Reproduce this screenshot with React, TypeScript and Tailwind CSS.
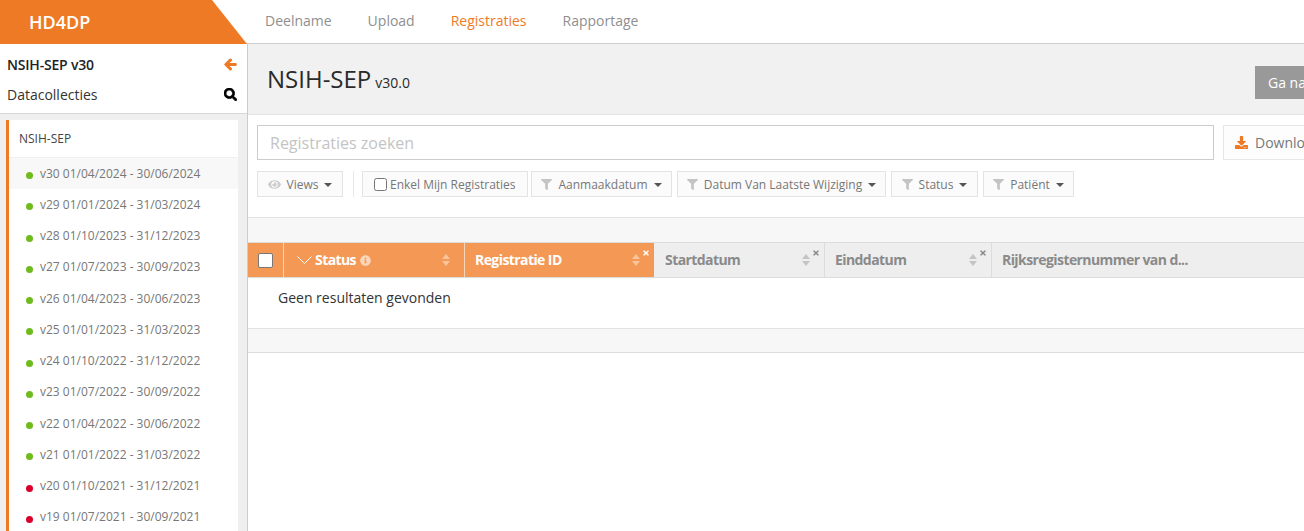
import { FaArrowLeft, FaDownload, FaEye, FaFilter, FaInfoCircle, FaSearch, FaTimes } from "react-icons/fa"

const rows = [
  { label: "v30 01/04/2024 - 30/06/2024", ok: true, active: true },
  { label: "v29 01/01/2024 - 31/03/2024", ok: true },
  { label: "v28 01/10/2023 - 31/12/2023", ok: true },
  { label: "v27 01/07/2023 - 30/09/2023", ok: true },
  { label: "v26 01/04/2023 - 30/06/2023", ok: true },
  { label: "v25 01/01/2023 - 31/03/2023", ok: true },
  { label: "v24 01/10/2022 - 31/12/2022", ok: true },
  { label: "v23 01/07/2022 - 30/09/2022", ok: true },
  { label: "v22 01/04/2022 - 30/06/2022", ok: true },
  { label: "v21 01/01/2022 - 31/03/2022", ok: true },
  { label: "v20 01/10/2021 - 31/12/2021", ok: false },
  { label: "v19 01/07/2021 - 30/09/2021", ok: false },
]

function Caret() {
  return <span className="ml-[6px] w-0 h-0 border-x-[4px] border-x-transparent border-t-[4px] border-t-[#555]" />
}

function FilterButton({ label, width }: { label: string; width: string }) {
  return (
    <div className={`h-[26px] pt-[1px] flex items-center justify-center border border-[#e3e3e3] bg-[#fbfbfb] text-[12px] text-[#777] ${width}`}>
      <FaFilter size={11} className="mr-[6px] shrink-0 text-[#c4c4c4]" />
      <span>{label}</span>
      <Caret />
    </div>
  )
}

function SortArrows({ color }: { color: string }) {
  return (
    <svg viewBox="0 0 8 12" className="w-[8px] h-[12px] shrink-0">
      <path d="M4 0l4 5H0zM4 12L0 7h8z" fill={color} />
    </svg>
  )
}

function HeaderCell({ label, width }: { label: string; width: string }) {
  return (
    <div className={`relative h-full flex items-center justify-between pr-[14px] border-r border-[#dcdcdc] ${width}`}>
      <span className="text-[14px] font-bold tracking-[-0.58px] text-[#8a8a8a] pb-[2px]">{label}</span>
      <SortArrows color="#c4c4c4" />
      <FaTimes size={8} className="absolute top-[6px] right-[4px] text-[#888]" />
    </div>
  )
}

export default function App() {
  return (
    <div className="h-[531px] w-[1304px] overflow-hidden bg-white flex flex-col font-['Open_Sans',sans-serif] text-[#333]">
      <header className="h-[44px] shrink-0 flex border-b border-[#ccc]">
        <div className="w-[247px] h-[44px] shrink-0 flex items-center bg-[#ef7a26] [clip-path:polygon(0_0,212px_0,100%_100%,0_100%)] pl-[29px]">
          <span className="text-[18px] font-semibold text-white">HD4DP</span>
        </div>
        <nav className="flex items-center gap-[36px] pl-[18px] pb-[2px] text-[14px] text-[#8f8f8f]">
          <span>Deelname</span>
          <span>Upload</span>
          <span className="text-[#ef7a26]">Registraties</span>
          <span>Rapportage</span>
        </nav>
      </header>

      <div className="flex-1 flex min-h-0">
        <aside className="w-[248px] shrink-0 bg-[#efefef] border-r border-[#ccc] flex flex-col">
          <div className="h-[70px] shrink-0 bg-white border-b border-[#d8d8d8] pl-[7px] pr-[10px] flex flex-col">
            <div className="h-[40px] flex items-center justify-between">
              <span className="text-[14px] font-semibold tracking-[-0.2px] text-[#222]">NSIH-SEP v30</span>
              <FaArrowLeft size={13} className="text-[#ef7a26] stroke-[40px]" />
            </div>
            <div className="flex items-center justify-between h-[20px]">
              <span className="text-[14px] text-[#333]">Datacollecties</span>
              <FaSearch size={13} className="text-black stroke-[30px]" />
            </div>
          </div>
          <div className="mt-[6px] ml-[6px] w-[232px] flex-1 bg-white border-l-[3px] border-[#ef7a26]">
            <div className="h-[38px] pl-[10px] flex items-center border-b border-[#f0f0f0] text-[12px] text-[#444]">NSIH-SEP</div>
            {rows.map((row) => (
              <div key={row.label} className={`h-[31.25px] flex items-center pl-[17px] text-[12px] text-[#777] ${row.active ? "bg-[#f8f8f8]" : ""}`}>
                <span className={`w-[7px] h-[7px] mt-[4px] rounded-full mr-[7px] ${row.ok ? "bg-[#6fba1c]" : "bg-[#d9002a]"}`} />
                {row.label}
              </div>
            ))}
          </div>
        </aside>

        <main className="flex-1 min-w-0 flex flex-col overflow-hidden">
          <div className="h-[71px] shrink-0 bg-[#f1f1f1] border-b border-[#e3e3e3] flex items-start justify-between pl-[19px]">
            <div className="pt-[19px] flex items-baseline gap-[4px] text-[#2a2a2a]">
              <span className="text-[24px] leading-[32px]">NSIH-SEP</span>
              <span className="text-[14px]">v30.0</span>
            </div>
            <div className="mt-[22px] w-[49px] h-[33px] bg-[#999] text-white text-[14px] pl-[13px] flex items-center overflow-hidden whitespace-nowrap">Ga naar</div>
          </div>

          <div className="h-[103px] shrink-0 bg-white pl-[9px] pt-[10px] border-b border-[#e3e3e3]">
            <div className="flex">
              <div className="w-[957px] h-[35px] border border-[#ccc] flex items-center pl-[12px] text-[16px] text-[#c4c4c4]">Registraties zoeken</div>
              <div className="ml-[9px] flex-1 h-[35px] border border-[#e6e6e6] border-r-0 bg-[#fdfdfd] flex items-center pl-[11px] text-[14px] text-[#777] overflow-hidden whitespace-nowrap">
                <FaDownload size={13} className="text-[#ef7a26] mr-[7px] shrink-0" />
                Download
              </div>
            </div>
            <div className="flex mt-[11px]">
              <div className="w-[86px] h-[26px] pt-[1px] flex items-center justify-center border border-[#e3e3e3] bg-[#fbfbfb] text-[12px] text-[#777]">
                <FaEye size={13} className="mr-[6px] text-[#ccc]" />
                Views
                <Caret />
              </div>
              <div className="w-px h-[26px] bg-[#e8e8e8] ml-[10px] mr-[8px]" />
              <div className="w-[166px] h-[26px] pt-[1px] flex items-center pl-[11px] border border-[#e3e3e3] bg-[#fbfbfb] text-[12px] text-[#777]">
                <input type="checkbox" readOnly className="w-[13px] h-[13px] mr-[3px]" />
                Enkel Mijn Registraties
              </div>
              <div className="flex gap-[5px] ml-[3px]">
                <FilterButton label="Aanmaakdatum" width="w-[141px]" />
                <FilterButton label="Datum Van Laatste Wijziging" width="w-[209px]" />
                <FilterButton label="Status" width="w-[87px]" />
                <FilterButton label="Patiënt" width="w-[91px]" />
              </div>
            </div>
          </div>

          <div className="h-[24px] shrink-0 bg-[#f7f7f7]" />

          <div className="h-[36px] shrink-0 flex border-y border-[#dcdcdc] bg-[#eee]">
            <div className="w-[36px] h-full shrink-0 bg-[#f49855] border-r border-[#fbd5b8] flex items-center justify-center">
              <span className="w-[15px] h-[15px] bg-white border border-[#777] rounded-[2px]" />
            </div>
            <div className="relative w-[181px] h-full shrink-0 bg-[#f49855] border-r border-[#fbd5b8] flex items-center pl-[13px] pr-[14px] text-white">
              <svg viewBox="0 0 15 8" className="w-[15px] h-[8px] mr-[3px] shrink-0" fill="none" stroke="currentColor" strokeWidth="1">
                <path d="M.5.5l7 7 7-7" />
              </svg>
              <span className="text-[14px] font-bold tracking-[-0.58px] pb-[2px]">Status</span>
              <FaInfoCircle size={11} className="ml-[4px] text-[#fbd5b8]" />
              <span className="ml-auto"><SortArrows color="#fbc49b" /></span>
            </div>
            <div className="relative w-[189px] h-full shrink-0 bg-[#f49855] flex items-center justify-between pl-[10px] pr-[14px] text-white">
              <span className="text-[14px] font-bold tracking-[-0.58px] pb-[2px]">Registratie ID</span>
              <SortArrows color="#fbc49b" />
              <FaTimes size={8} className="absolute top-[6px] right-[4px] text-white" />
            </div>
            <HeaderCell label="Startdatum" width="w-[171px] pl-[11px] shrink-0" />
            <HeaderCell label="Einddatum" width="w-[167px] pl-[10px] shrink-0" />
            <div className="flex-1 h-full flex items-center pl-[10px]">
              <span className="text-[14px] font-bold tracking-[-0.58px] text-[#8a8a8a] pb-[2px]">Rijksregisternummer van d...</span>
            </div>
          </div>

          <div className="h-[51px] shrink-0 border-b border-[#e3e3e3] pl-[30px] pt-[9px] text-[14px] text-[#333]">Geen resultaten gevonden</div>
          <div className="h-[24px] shrink-0 bg-[#f7f7f7] border-b border-[#dcdcdc]" />
        </main>
      </div>
    </div>
  )
}
